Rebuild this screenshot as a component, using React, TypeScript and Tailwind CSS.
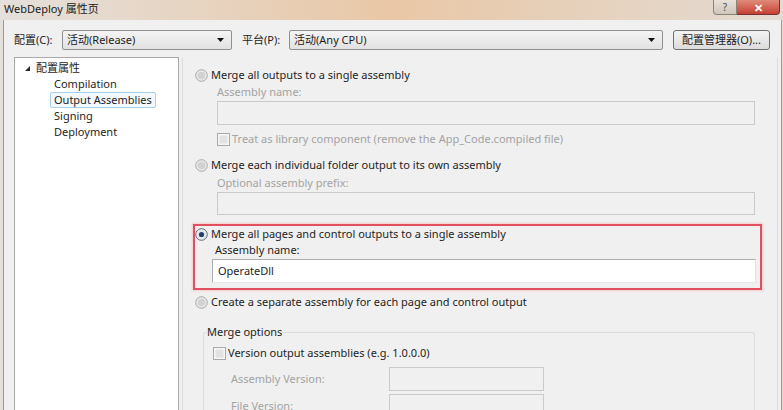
import React from 'react';

const FONT = { fontFamily: '"Noto Sans", "Noto Sans CJK SC", sans-serif' };

const Radio: React.FC<{ checked?: boolean }> = ({ checked }) => (
  <svg width="13" height="13" viewBox="0 0 13 13" className="shrink-0">
    <circle cx="6.5" cy="6.5" r="5.8" fill="#e9e9e9" stroke={checked ? '#5f6b7a' : '#a9a9a9'} strokeWidth="1" />
    <circle cx="6.5" cy="6.5" r="3.8" fill={checked ? '#dfe6ee' : '#d2d2d2'} />
    {checked && <circle cx="6.5" cy="6.5" r="2.6" fill="#23416b" />}
  </svg>
);

const Check: React.FC = () => (
  <svg width="13" height="13" viewBox="0 0 13 13" className="shrink-0">
    <rect x="0.5" y="0.5" width="12" height="12" fill="#f6f6f6" stroke="#a9a9a9" />
    <rect x="2.5" y="2.5" width="8" height="8" fill="#e2e2e2" />
  </svg>
);

const Arrow: React.FC = () => (
  <svg width="7" height="4" viewBox="0 0 7 4" className="shrink-0">
    <polygon points="0,0 7,0 3.5,4" fill="#111" />
  </svg>
);

const Combo: React.FC<{ text: string; width: string }> = ({ text, width }) => (
  <div
    className={`${width} h-[20px] flex items-center justify-between pl-[4px] pr-[7px] rounded-[2px] border border-[#8f9094] bg-gradient-to-b from-[#f4f4f4] to-[#e2e2e2] text-[#1e1e1e]`}
  >
    <span>{text}</span>
    <Arrow />
  </div>
);

const Row: React.FC<{ children: React.ReactNode; className?: string }> = ({ children, className }) => (
  <div className={`h-[16px] flex items-center ${className ?? ''}`}>{children}</div>
);

export default function App() {
  return (
    <div
      className="w-[783px] h-[410px] overflow-hidden flex flex-col text-[11px] bg-gradient-to-r from-[#e4e0dc] via-[#e9c7a6] to-[#e3dbd2]"
      style={FONT}
    >
      {/* title bar */}
      <div className="h-[20px] flex items-start shrink-0">
        <span className="pl-[4px] pt-[1px] text-[#1a1a1a] leading-[16px]">WebDeploy 属性页</span>
        <div className="ml-auto mr-[3px] flex">
          <div className="w-[24px] h-[15px] flex items-center justify-center rounded-bl-[4px] border border-t-0 border-[#8b8376] bg-gradient-to-b from-[#e9e2da] to-[#cfc6bb] text-[10px] text-[#4a4a4a] leading-none">?</div>
          <div className="w-[43px] h-[15px] flex items-center justify-center rounded-br-[4px] border border-t-0 border-l-0 border-[#7a2f2f] bg-gradient-to-b from-[#e08a7a] to-[#c23f32] text-white text-[11px] font-bold leading-none">✕</div>
        </div>
      </div>

      {/* body */}
      <div className="flex-1 ml-[3px] mr-[1px] border-l border-r border-[#9a9a9a] bg-[#f0f0f0] flex flex-col pl-[10px] pr-[3px] min-h-0">
        {/* configuration row */}
        <div className="mt-[10px] h-[20px] flex items-center shrink-0 text-[#1e1e1e]">
          <span className="w-[48px]">配置(C):</span>
          <Combo text="活动(Release)" width="w-[170px]" />
          <span className="w-[47px] ml-[10px]">平台(P):</span>
          <Combo text="活动(Any CPU)" width="w-[374px]" />
          <div className="ml-[10px] w-[97px] h-[20px] flex items-center justify-center rounded-[3px] border border-[#707070] bg-gradient-to-b from-[#f3f3f3] to-[#dcdcdc]">
            配置管理器(O)...
          </div>
        </div>

        {/* main */}
        <div className="mt-[7px] flex-1 flex min-h-0">
          {/* tree */}
          <div className="w-[165px] shrink-0 bg-white border border-[#a8a8a8] border-b-0 pt-[2px] text-[#1e1e1e]">
            <div className="h-[16px] flex items-center pl-[10px]">
              <svg width="5" height="5" viewBox="0 0 5 5" className="mr-[6px]">
                <polygon points="5,0 5,5 0,5" fill="#262626" />
              </svg>
              <span>配置属性</span>
            </div>
            <div className="pl-[35px] flex flex-col items-start">
              <div className="h-[16px] flex items-center px-[3px] border border-transparent">Compilation</div>
              <div className="h-[16px] flex items-center px-[3px] border border-[#a7cdef] rounded-[2px] bg-[#f3f8fd]">Output Assemblies</div>
              <div className="h-[16px] flex items-center px-[3px] border border-transparent">Signing</div>
              <div className="h-[16px] flex items-center px-[3px] border border-transparent">Deployment</div>
            </div>
          </div>

          {/* property panel */}
          <div className="flex-1 ml-[3px] border-l border-r border-[#dcdcdc] pl-[12px] pt-[10px] text-[#1e1e1e] min-w-0">
            <Row>
              <Radio />
              <span className="ml-[3px]">Merge all outputs to a single assembly</span>
            </Row>
            <Row className="mt-[1px] pl-[22px] text-[#a3a3a3]">Assembly name:</Row>
            <div className="mt-[1px] ml-[22px] w-[538px] h-[24px] border border-[#cacaca] bg-[#f0f0f0]" />
            <Row className="mt-[6px] pl-[22px] text-[#a3a3a3]">
              <Check />
              <span className="ml-[2px]">Treat as library component (remove the App_Code.compiled file)</span>
            </Row>
            <Row className="mt-[10px]">
              <Radio />
              <span className="ml-[3px]">Merge each individual folder output to its own assembly</span>
            </Row>
            <Row className="mt-[2px] pl-[22px] text-[#a3a3a3]">Optional assembly prefix:</Row>
            <div className="mt-[1px] ml-[22px] w-[538px] h-[23px] border border-[#cacaca] bg-[#f0f0f0]" />

            {/* highlighted option */}
            <div className="mt-[9px] -ml-[2px] w-[569px] border-2 border-[#e0505e] shadow-[0_0_2px_1px_#f6c9cd] pb-[5px]">
              <Row>
                <Radio checked />
                <span className="ml-[3px]">Merge all pages and control outputs to a single assembly</span>
              </Row>
              <Row className="pl-[20px]">Assembly name:</Row>
              <div className="mt-[1px] ml-[17px] mr-[4px] h-[24px] flex items-center pl-[5px] border border-[#abadb3] border-b-[#e3e9ef] border-r-[#dbdfe6] bg-white">
                OperateDll
              </div>
            </div>

            <Row className="mt-[4px]">
              <Radio />
              <span className="ml-[3px]">Create a separate assembly for each page and control output</span>
            </Row>

            <fieldset className="mt-[14px] ml-[8px] w-[552px] border border-[#dcdcdc] border-b-0 rounded-[3px] px-[3px]">
              <legend className="px-0 h-[16px] leading-[16px]">Merge options</legend>
              <Row className="mt-[5px] pl-[6px]">
                <Check />
                <span className="ml-[2px]">Version output assemblies (e.g. 1.0.0.0)</span>
              </Row>
              <div className="mt-[6px] h-[24px] flex items-center pl-[24px] text-[#a3a3a3]">
                <span className="w-[158px]">Assembly Version:</span>
                <div className="w-[155px] h-[24px] border border-[#cacaca] bg-[#f0f0f0]" />
              </div>
              <div className="mt-[3px] h-[24px] flex items-center pl-[24px] text-[#a3a3a3]">
                <span className="w-[158px]">File Version:</span>
                <div className="w-[155px] h-[24px] border border-[#cacaca] bg-[#f0f0f0]" />
              </div>
            </fieldset>
          </div>
        </div>
      </div>
    </div>
  );
}
